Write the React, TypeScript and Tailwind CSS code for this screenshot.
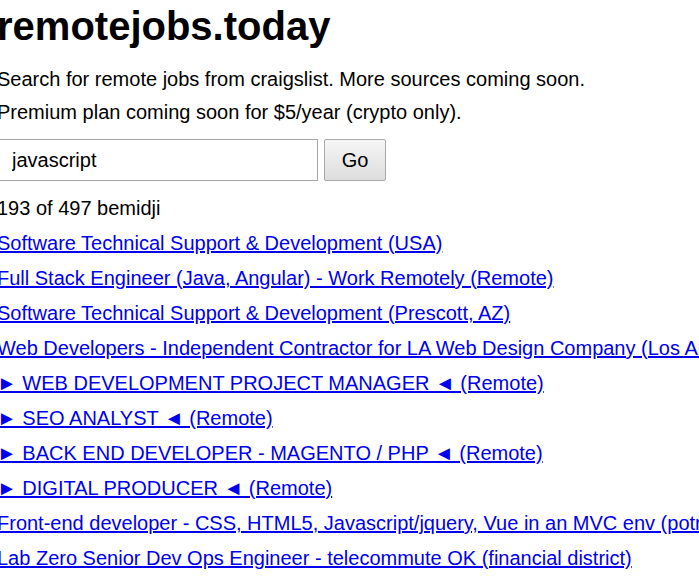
import React from "react";

const jobs = [
  "Software Technical Support & Development (USA)",
  "Full Stack Engineer (Java, Angular) - Work Remotely (Remote)",
  "Software Technical Support & Development (Prescott, AZ)",
  "Web Developers - Independent Contractor for LA Web Design Company (Los Angeles)",
  "► WEB DEVELOPMENT PROJECT MANAGER ◄ (Remote)",
  "► SEO ANALYST ◄ (Remote)",
  "► BACK END DEVELOPER - MAGENTO / PHP ◄ (Remote)",
  "► DIGITAL PRODUCER ◄ (Remote)",
  "Front-end developer - CSS, HTML5, Javascript/jquery, Vue in an MVC env (potrero hill)",
  "Lab Zero Senior Dev Ops Engineer - telecommute OK (financial district)",
];

export default function App() {
  return (
    <div className="w-[699px] h-[579px] overflow-hidden bg-white text-black font-['Liberation_Sans',Arial,sans-serif] text-[20px]">
      <div className="-ml-[3px] whitespace-nowrap">
        <h1 className="text-[40px] font-bold leading-[46px] pt-[3px] h-[63px]">
          remotejobs.today
        </h1>
        <div className="leading-[33px]">
          Search for remote jobs from craigslist. More sources coming soon.
        </div>
        <div className="leading-[33px]">
          Premium plan coming soon for $5/year (crypto only).
        </div>

        <form
          className="flex items-center gap-[6px] mt-[10px]"
          onSubmit={(e) => e.preventDefault()}
        >
          <input
            type="text"
            defaultValue="javascript"
            className="w-[321px] h-[42px] px-[14px] border border-[#a6a6a6] bg-white text-[20px] text-black outline-none font-['Liberation_Sans',Arial,sans-serif]"
          />
          <button
            type="submit"
            className="w-[62px] h-[42px] rounded-[2px] border border-[#a9a9a9] bg-gradient-to-b from-[#f6f6f6] to-[#dddddd] text-[20px] text-black font-['Liberation_Sans',Arial,sans-serif]"
          >
            Go
          </button>
        </form>

        <div className="mt-[10px] leading-[35px]">193 of 497 bemidji</div>

        <ul>
          {jobs.map((job, i) => (
            <li key={i} className="leading-[35px]">
              <a href="#" className="text-[#0000ee] underline">
                {job}
              </a>
            </li>
          ))}
        </ul>
      </div>
    </div>
  );
}
